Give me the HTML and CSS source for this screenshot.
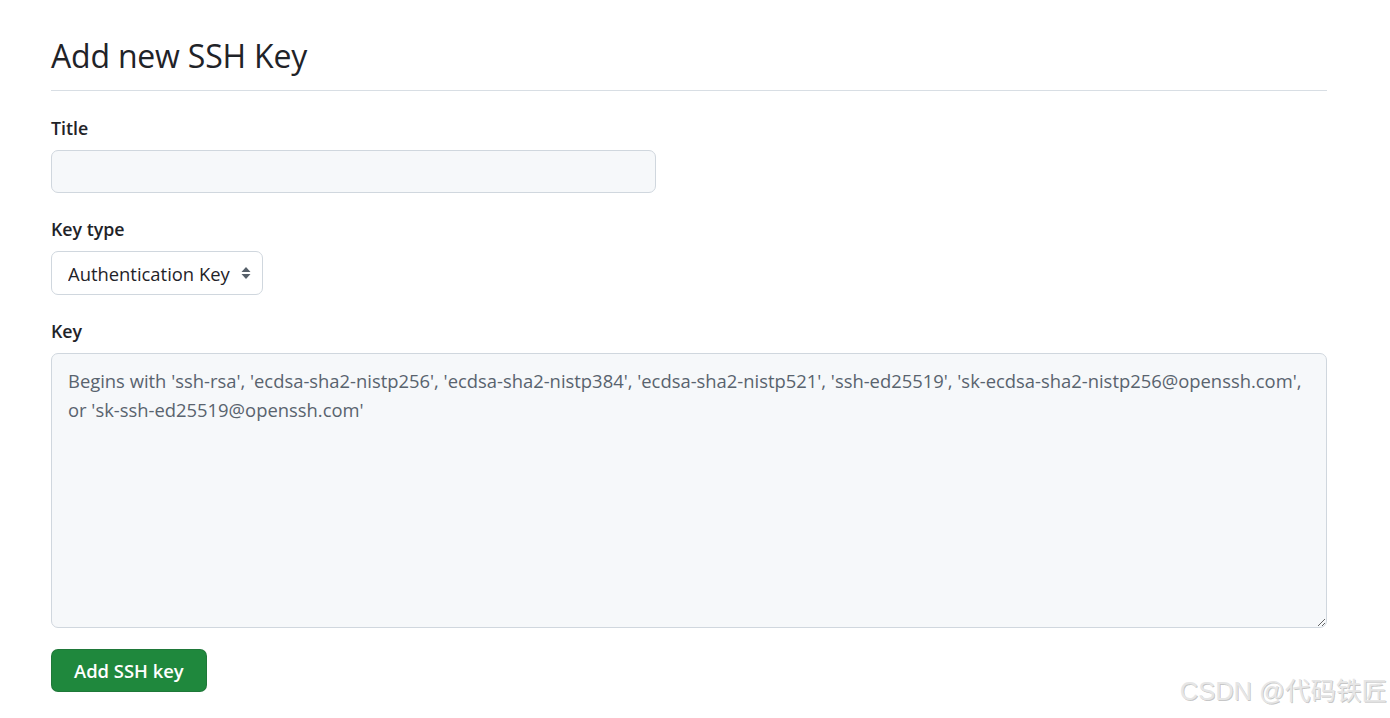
FILE: index.html
```html
<!DOCTYPE html>
<html lang="en">
<head>
    <meta charset="UTF-8">
    <meta name="viewport" content="width=device-width, initial-scale=1.0">
    <title>Add new SSH Key</title>
    <link rel="stylesheet" href="styles.css">
</head>
<body>
    <div class="page">
        <div class="subhead">
            <h1 class="subhead-heading">Add new SSH Key</h1>
        </div>

        <form class="ssh-form" onsubmit="return false;">
            <div class="form-group">
                <label class="form-label" for="keyTitle">Title</label>
                <input type="text" id="keyTitle" class="form-control title-input">
            </div>

            <div class="form-group">
                <label class="form-label" for="keyType">Key type</label>
                <div class="select-wrap">
                    <select id="keyType" class="form-select">
                        <option>Authentication Key</option>
                        <option>Signing Key</option>
                    </select>
                    <svg class="select-arrow" width="10" height="16" viewBox="0 0 10 16">
                        <path d="M5 2 L9.5 7 H0.5 Z" fill="#57606a"/>
                        <path d="M5 14 L9.5 9 H0.5 Z" fill="#57606a"/>
                    </svg>
                </div>
            </div>

            <div class="form-group last">
                <label class="form-label" for="keyBody">Key</label>
                <textarea id="keyBody" class="form-control key-input" placeholder="Begins with 'ssh-rsa', 'ecdsa-sha2-nistp256', 'ecdsa-sha2-nistp384', 'ecdsa-sha2-nistp521', 'ssh-ed25519', 'sk-ecdsa-sha2-nistp256@openssh.com', or 'sk-ssh-ed25519@openssh.com'"></textarea>
            </div>

            <button type="submit" class="btn-primary">Add SSH key</button>
        </form>
    </div>

    <div class="watermark">CSDN @代码铁匠</div>
</body>
</html>
```

FILE: styles.css
```css
* { margin: 0; padding: 0; box-sizing: border-box; }
body { font-family: 'Open Sans', 'Noto Sans', sans-serif; color: #1f2328; background: #ffffff; font-size: 18.4px; }
.page { padding: 34px 63px 0 51px; }
.subhead { border-bottom: 1px solid #d8dee4; padding-bottom: 12px; margin-bottom: 26px; }
.subhead-heading { font-size: 32px; font-weight: 400; line-height: 44px; letter-spacing: -0.2px; }
.form-group { margin-bottom: 25px; }
.form-group.last { margin-bottom: 21px; }
.form-label { display: block; font-weight: 600; font-size: 17.8px; line-height: 22px; margin-bottom: 11px; }
.form-control { display: block; font-family: inherit; font-size: 18.4px; color: #1f2328; background: #f6f8fa; border: 1px solid #d0d7de; border-radius: 7px; outline: none; }
.title-input { width: 605px; height: 43px; padding: 6px 16px; }
.select-wrap { position: relative; display: inline-block; }
.form-select { appearance: none; -webkit-appearance: none; font-family: inherit; font-size: 18.4px; color: #1f2328; background: #ffffff; border: 1px solid #d0d7de; border-radius: 7px; height: 44px; width: 212px; padding: 0 30px 0 16px; outline: none; }
.select-arrow { position: absolute; right: 12px; top: 14px; pointer-events: none; }
.key-input { width: 100%; height: 275px; padding: 12px 16px; line-height: 29px; resize: vertical; }
.key-input::placeholder { color: #59636e; }
.btn-primary { font-family: inherit; font-size: 18.4px; font-weight: 600; color: #ffffff; background: #1f883d; border: 1px solid rgba(31, 35, 40, 0.15); border-radius: 7px; height: 43px; padding: 0 22px; cursor: pointer; }
.btn-primary:hover { background: #1a7f37; }
.watermark { position: absolute; right: 3px; bottom: 11px; font-family: 'Liberation Sans', 'Noto Sans CJK SC', sans-serif; font-size: 25.5px; font-weight: 400; color: #e6e6e6; text-shadow: 1px 1px 0 rgba(0, 0, 0, 0.22); }
```
